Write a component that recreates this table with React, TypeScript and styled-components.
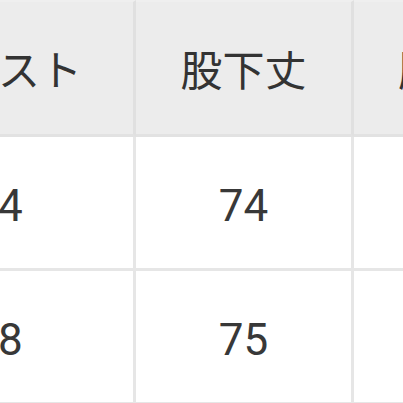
import React from "react";
import styled, { createGlobalStyle } from "styled-components";

const Global = createGlobalStyle`
  html, body { margin: 0; padding: 0; background: #ffffff; overflow: hidden; }
  #root { width: 403px; height: 403px; overflow: hidden; }
`;

const Viewport = styled.div`
  width: 403px;
  height: 403px;
  overflow: hidden;
  background: #ffffff;
`;

const SizeTable = styled.table`
  margin-left: -137px;
  border-collapse: separate;
  border-spacing: 0;
  table-layout: fixed;
  width: 666px;
`;

const HeadCell = styled.th`
  box-sizing: border-box;
  height: 137px;
  padding: 0;
  background: #ececec;
  border-right: 3px solid #e0e0e0;
  border-bottom: 3px solid #e2e2e2;
  border-top: 2px solid #efefef;
  color: #333333;
  font-family: "Noto Sans CJK JP", "Noto Sans", sans-serif;
  font-size: 42px;
  font-weight: 400;
  text-align: center;
  vertical-align: middle;
  white-space: nowrap;
  line-height: 1;
`;

const Cell = styled.td`
  box-sizing: border-box;
  height: 134px;
  padding: 0;
  background: #ffffff;
  border-right: 3px solid #e6e6e6;
  border-bottom: 3px solid #e6e6e6;
  color: #383838;
  font-family: Roboto, "Noto Sans", sans-serif;
  font-size: 44px;
  font-weight: 400;
  text-align: center;
  vertical-align: middle;
  padding-top: 6px;
  line-height: 1;
`;

const columns = [
  { label: "ウエスト", width: 273 },
  { label: "股下丈", width: 218 },
  { label: "股上", width: 175 },
];

const rows = [
  ["64", "74", "26"],
  ["68", "75", "27"],
];

export default function App() {
  return (
    <>
      <Global />
      <Viewport>
        <SizeTable>
          <colgroup>
            {columns.map((c) => (
              <col key={c.label} style={{ width: c.width }} />
            ))}
          </colgroup>
          <thead>
            <tr>
              {columns.map((c) => (
                <HeadCell key={c.label}>{c.label}</HeadCell>
              ))}
            </tr>
          </thead>
          <tbody>
            {rows.map((r, i) => (
              <tr key={i}>
                {r.map((v, j) => (
                  <Cell key={j}>{v}</Cell>
                ))}
              </tr>
            ))}
          </tbody>
        </SizeTable>
      </Viewport>
    </>
  );
}
